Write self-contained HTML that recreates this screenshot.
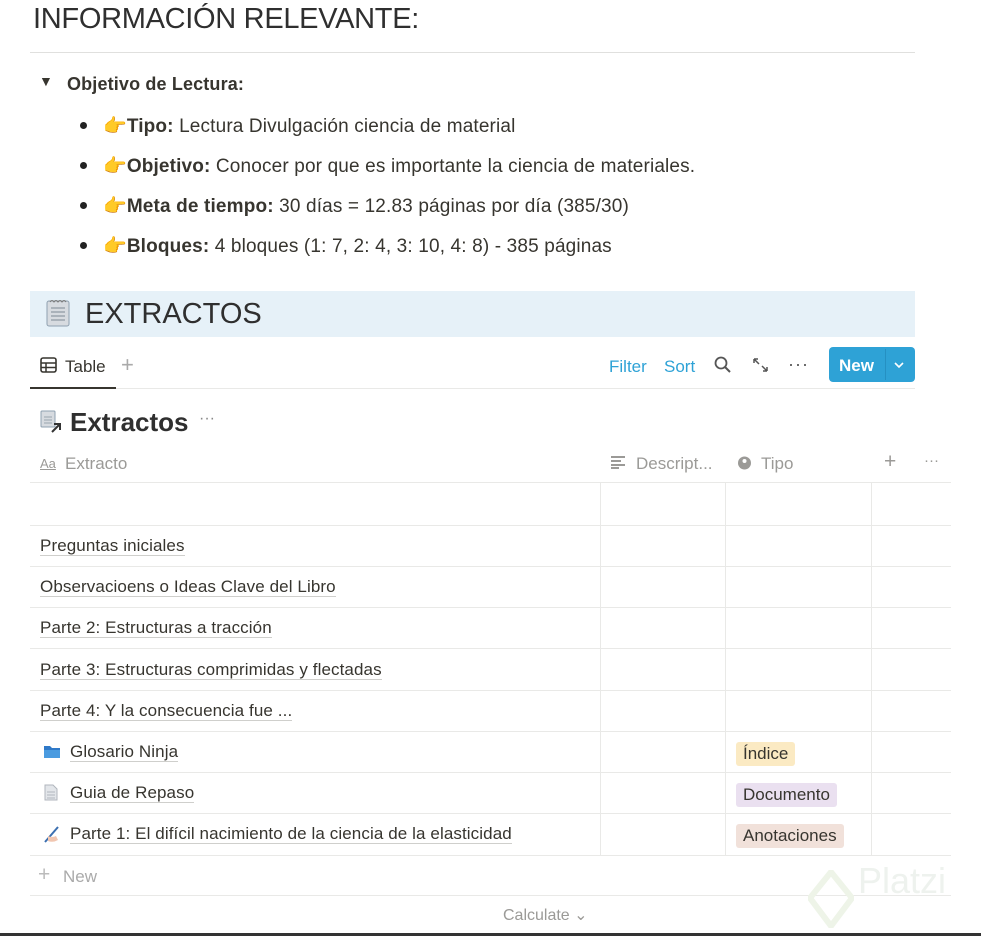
<!DOCTYPE html>
<html><head><meta charset="utf-8"><style>
*{margin:0;padding:0;box-sizing:border-box}
body{width:981px;height:936px;background:#fff;font-family:"Liberation Sans",sans-serif;color:#37352f;position:relative;overflow:hidden}
.a{position:absolute;white-space:nowrap}
.h1{left:33px;top:3px;font-size:29px;color:#2f2f2f;letter-spacing:-0.3px}
.li{font-size:19px;color:#37352f;letter-spacing:0.15px}
.dot{position:absolute;width:7px;height:7px;border-radius:50%;background:#222}
.hand{color:#f2c94c}
.hl{position:absolute;height:1px;background:#e9e9e7;left:30px;width:921px}
.vl{position:absolute;width:1px;background:#e9e9e7;top:483px;height:372px}
.row{font-size:17px;color:#37352f;left:40px;letter-spacing:0.1px}
.row span{border-bottom:1px solid #cfcfcc}
.tag{position:absolute;font-size:17px;padding:2px 7px;border-radius:3px;color:#37352f}
.gray{color:#9b9a97}
</style></head><body>
<div class="a h1">INFORMACIÓN RELEVANTE:</div>
<div class="a" style="left:30px;top:52px;width:885px;height:1px;background:#e0e0de"></div>
<div class="a li" style="left:39px;top:73px;font-size:14px">▼</div>
<div class="a li" style="left:67px;top:74px;font-weight:bold;font-size:18px">Objetivo de Lectura:</div>
<div class="dot" style="left:80px;top:122px"></div>
<div class="a li" style="left:103px;top:114px"><span class="hand">👉</span><b>Tipo:</b> Lectura Divulgación ciencia de material</div>
<div class="dot" style="left:80px;top:162px"></div>
<div class="a li" style="left:103px;top:154px"><span class="hand">👉</span><b>Objetivo:</b> Conocer por que es importante la ciencia de materiales.</div>
<div class="dot" style="left:80px;top:202px"></div>
<div class="a li" style="left:103px;top:194px"><span class="hand">👉</span><b>Meta de tiempo:</b> 30 días = 12.83 páginas por día (385/30)</div>
<div class="dot" style="left:80px;top:242px"></div>
<div class="a li" style="left:103px;top:234px"><span class="hand">👉</span><b>Bloques:</b> 4 bloques (1: 7, 2: 4, 3: 10, 4: 8) - 385 páginas</div>

<div class="a" style="left:30px;top:291px;width:885px;height:46px;background:#e6f1f8"></div>
<svg class="a" style="left:45px;top:298px" width="26" height="30"><rect x="2" y="3" width="22" height="25" rx="2" fill="#d7dbe0" stroke="#8fa0b0"/><g stroke="#9aa4ae" stroke-width="1.5"><line x1="6" y1="10" x2="20" y2="10"/><line x1="6" y1="14" x2="20" y2="14"/><line x1="6" y1="18" x2="20" y2="18"/><line x1="6" y1="22" x2="20" y2="22"/></g><path d="M5 4q2-3 4 0q2-3 4 0q2-3 4 0q2-3 4 0" stroke="#777" fill="none"/></svg>
<div class="a" style="left:85px;top:298px;font-size:29px;color:#2f2f2f">EXTRACTOS</div>

<svg class="a" style="left:40px;top:357px" width="17" height="16"><rect x="1" y="1" width="15" height="14" rx="2" fill="none" stroke="#37352f" stroke-width="1.6"/><line x1="1" y1="6" x2="16" y2="6" stroke="#37352f" stroke-width="1.5"/><line x1="1" y1="10.5" x2="16" y2="10.5" stroke="#37352f" stroke-width="1.5"/><line x1="6" y1="6" x2="6" y2="15" stroke="#37352f" stroke-width="1.5"/></svg>
<div class="a" style="left:65px;top:357px;font-size:17px">Table</div>
<div class="a gray" style="left:121px;top:352px;font-size:22px;color:#aaa">+</div>
<div class="a" style="left:30px;top:387px;width:86px;height:2px;background:#37352f"></div>
<div class="a" style="left:116px;top:388px;width:799px;height:1px;background:#e9e9e7"></div>
<div class="a" style="left:609px;top:357px;font-size:17px;color:#2ea2d6">Filter</div>
<div class="a" style="left:664px;top:357px;font-size:17px;color:#2ea2d6">Sort</div>
<svg class="a" style="left:714px;top:356px" width="18" height="18"><circle cx="7" cy="7" r="5.5" fill="none" stroke="#555" stroke-width="1.8"/><line x1="11" y1="11" x2="16" y2="16" stroke="#555" stroke-width="2"/></svg>
<svg class="a" style="left:752px;top:357px" width="18" height="16"><path d="M2 2l5 5M2 2h4M2 2v4M15 14l-5-5M15 14h-4M15 14v-4" stroke="#555" stroke-width="1.5" fill="none"/></svg>
<div class="a" style="left:788px;top:354px;font-size:18px;color:#555;letter-spacing:1px">···</div>
<div class="a" style="left:829px;top:347px;width:86px;height:35px;background:#2ea2d6;border-radius:4px"></div>
<div class="a" style="left:885px;top:349px;width:1px;height:31px;background:#2590c2"></div>
<div class="a" style="left:839px;top:356px;font-size:17px;font-weight:bold;color:#fff">New</div>
<svg class="a" style="left:893px;top:360px" width="12" height="10"><path d="M2 3l4 4 4-4" stroke="#fff" stroke-width="1.6" fill="none"/></svg>

<svg class="a" style="left:40px;top:410px" width="24" height="24"><rect x="1" y="1" width="14" height="16" rx="1" fill="#d7dbe0" stroke="#8fa0b0"/><g stroke="#9aa4ae"><line x1="4" y1="7" x2="12" y2="7"/><line x1="4" y1="10" x2="12" y2="10"/><line x1="4" y1="13" x2="12" y2="13"/></g><path d="M12 22l8-8M14 14h6v6" stroke="#333" stroke-width="2" fill="none"/></svg>
<div class="a" style="left:70px;top:407px;font-size:26px;font-weight:bold;color:#2f2f2f">Extractos</div>
<div class="a" style="left:199px;top:410px;font-size:16px;color:#888">···</div>

<div class="a gray" style="left:40px;top:456px;font-size:13px;text-decoration:underline">Aa</div>
<div class="a gray" style="left:65px;top:454px;font-size:17px">Extracto</div>
<svg class="a" style="left:610px;top:455px" width="16" height="14"><g stroke="#9b9a97" stroke-width="2"><line x1="1" y1="2" x2="15" y2="2"/><line x1="1" y1="6" x2="11" y2="6"/><line x1="1" y1="10" x2="15" y2="10"/><line x1="1" y1="13" x2="9" y2="13"/></g></svg>
<div class="a gray" style="left:636px;top:454px;font-size:17px">Descript...</div>
<svg class="a" style="left:737px;top:456px" width="15" height="14"><circle cx="7.5" cy="7" r="6.5" fill="#9b9a97"/><circle cx="7.5" cy="5" r="2" fill="#fff"/></svg>
<div class="a gray" style="left:761px;top:454px;font-size:17px">Tipo</div>
<div class="a gray" style="left:884px;top:450px;font-size:21px">+</div>
<div class="a gray" style="left:924px;top:452px;font-size:15px">···</div>

<div class="hl" style="top:482px"></div>
<div class="hl" style="top:525px"></div>
<div class="hl" style="top:566px"></div>
<div class="hl" style="top:607px"></div>
<div class="hl" style="top:648px"></div>
<div class="hl" style="top:690px"></div>
<div class="hl" style="top:731px"></div>
<div class="hl" style="top:772px"></div>
<div class="hl" style="top:813px"></div>
<div class="hl" style="top:855px"></div>
<div class="hl" style="top:895px"></div>
<div class="vl" style="left:600px"></div>
<div class="vl" style="left:725px"></div>
<div class="vl" style="left:871px"></div>

<div class="a row" style="top:536px"><span>Preguntas iniciales</span></div>
<div class="a row" style="top:577px"><span>Observacioens o Ideas Clave del Libro</span></div>
<div class="a row" style="top:618px"><span>Parte 2: Estructuras a tracción</span></div>
<div class="a row" style="top:660px"><span>Parte 3: Estructuras comprimidas y flectadas</span></div>
<div class="a row" style="top:701px"><span>Parte 4: Y la consecuencia fue ...</span></div>
<svg class="a" style="left:43px;top:744px" width="18" height="15"><path d="M1 2h6l2 2h8v10H1z" fill="#2f79c8"/><path d="M1 6h16v8H1z" fill="#4a9be0"/></svg>
<div class="a row" style="left:70px;top:742px"><span>Glosario Ninja</span></div>
<svg class="a" style="left:44px;top:784px" width="14" height="17"><path d="M1 1h8l4 4v11H1z" fill="#e3e6ea" stroke="#b0b6bd"/><g stroke="#b0b6bd"><line x1="3" y1="8" x2="11" y2="8"/><line x1="3" y1="11" x2="11" y2="11"/><line x1="3" y1="14" x2="11" y2="14"/></g></svg>
<div class="a row" style="left:70px;top:783px"><span>Guia de Repaso</span></div>
<svg class="a" style="left:42px;top:824px" width="20" height="20"><path d="M3 18l13-15" stroke="#3b6fb0" stroke-width="2"/><path d="M6 12q4 2 8 0l2 4q-5 3-10 1z" fill="#f1c6b0"/></svg>
<div class="a row" style="left:70px;top:824px"><span>Parte 1: El difícil nacimiento de la ciencia de la elasticidad</span></div>
<div class="tag" style="left:736px;top:742px;background:#fbeac3">Índice</div>
<div class="tag" style="left:736px;top:783px;background:#eae0f0">Documento</div>
<div class="tag" style="left:736px;top:824px;background:#f1e1da">Anotaciones</div>

<div class="a" style="left:38px;top:863px;font-size:21px;color:#bbb">+</div>
<div class="a" style="left:63px;top:867px;font-size:17px;color:#aaa">New</div>
<div class="a" style="left:503px;top:905px;font-size:16px;color:#9b9a97">Calculate ⌄</div>
<div class="a" style="left:858px;top:860px;font-size:36px;color:#eef2ee">Platzi</div>
<svg class="a" style="left:808px;top:870px" width="46" height="58"><path d="M23 2L44 28 23 56 2 28z" fill="none" stroke="#eef4e8" stroke-width="6"/></svg>
<div class="a" style="left:0;top:933px;width:981px;height:3px;background:#333"></div>
</body></html>
